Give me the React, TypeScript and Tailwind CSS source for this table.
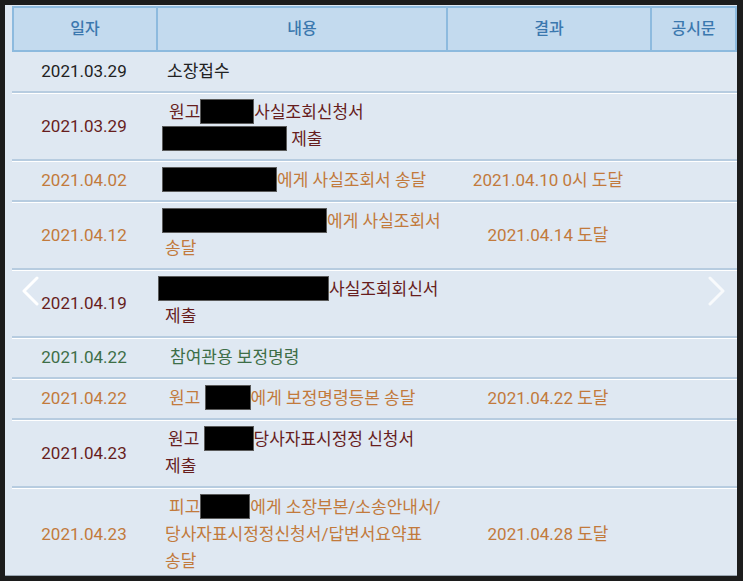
const BLACK = "text-[#222222]";
const RED = "text-[#671d1d]";
const ORANGE = "text-[#c27a3c]";
const GREEN = "text-[#3d6e47]";

function Box({ w, className = "" }: { w: number; className?: string }) {
  return (
    <span
      className={`inline-block h-[25px] bg-black border border-[#5a5a5a] align-[-6px] ${className}`}
      style={{ width: w }}
    />
  );
}

type Row = {
  date: string;
  color: string;
  content: React.ReactNode;
  result?: string;
  first?: boolean;
};

const rows: Row[] = [
  { date: "2021.03.29", color: BLACK, content: <span className="ml-[2px]">소장접수</span>, first: true },
  {
    date: "2021.03.29",
    color: RED,
    content: (
      <>
        <span className="ml-[4px]">원고</span>
        <Box w={54} />
        사실조회신청서
        <br />
        <Box w={125} className="-ml-[3px]" /> 제출
      </>
    ),
  },
  {
    date: "2021.04.02",
    color: ORANGE,
    content: (
      <>
        <Box w={115} className="-ml-[3px]" />
        에게 사실조회서 송달
      </>
    ),
    result: "2021.04.10 0시 도달",
  },
  {
    date: "2021.04.12",
    color: ORANGE,
    content: (
      <>
        <Box w={165} className="-ml-[3px]" />
        에게 사실조회서
        <br />
        송달
      </>
    ),
    result: "2021.04.14 도달",
  },
  {
    date: "2021.04.19",
    color: RED,
    content: (
      <>
        <Box w={171} className="-ml-[7px]" />
        사실조회회신서
        <br />
        제출
      </>
    ),
  },
  { date: "2021.04.22", color: GREEN, content: <span className="ml-[5px]">참여관용 보정명령</span> },
  {
    date: "2021.04.22",
    color: ORANGE,
    content: (
      <>
        <span className="ml-[4px]">원고 </span>
        <Box w={46} />
        에게 보정명령등본 송달
      </>
    ),
    result: "2021.04.22 도달",
  },
  {
    date: "2021.04.23",
    color: RED,
    content: (
      <>
        <span className="ml-[3px]">원고 </span>
        <Box w={50} />
        당사자표시정정 신청서
        <br />
        제출
      </>
    ),
  },
  {
    date: "2021.04.23",
    color: ORANGE,
    content: (
      <>
        <span className="ml-[4px]">피고</span>
        <Box w={50} />
        에게 소장부본/소송안내서/
        <br />
        당사자표시정정신청서/답변서요약표
        <br />
        송달
      </>
    ),
    result: "2021.04.28 도달",
  },
];

export default function App() {
  return (
    <div className="relative h-[581px] w-[743px] overflow-hidden bg-[#1c1c1c] pl-[5px] pt-[5px] font-['Roboto','Noto_Sans_CJK_KR',sans-serif]">
      <div className="h-[571px] w-[732px] overflow-hidden border-b border-[#9aa6b2] bg-[#dfe8f2] pl-[7px] pt-[1px]">
        <div className="flex h-[46px] border-2 border-[#8dbade] bg-[#c3daee] text-[16px] font-medium text-[#3b78ae]">
          <div className="flex w-[142px] items-center justify-center">일자</div>
          <div className="flex w-[290px] items-center justify-center border-l-2 border-[#8dbade]">내용</div>
          <div className="flex w-[204px] items-center justify-center border-l-2 border-[#8dbade]">결과</div>
          <div className="flex flex-1 items-center justify-center border-l-2 border-[#8dbade]">공시문</div>
        </div>

        {rows.map((r, i) => (
          <div
            key={i}
            className={`flex items-center py-[6px] leading-[27px] ${r.color} ${
              r.first ? "" : "border-t-2 border-[#b7cce0] shadow-[inset_0_1px_0_#ffffff]"
            }`}
          >
            <div className="w-[144px] text-center text-[17px]">{r.date}</div>
            <div className="w-[290px] pl-[9px] text-[17px]">{r.content}</div>
            <div className="w-[204px] text-center text-[17px]">{r.result ?? ""}</div>
            <div className="flex-1" />
          </div>
        ))}
      </div>

      <svg className="absolute left-[21px] top-[276px]" width="18" height="30" viewBox="0 0 18 30">
        <polyline points="16,2 3,15 16,28" fill="none" stroke="#ffffff" strokeWidth="3" strokeLinecap="round" strokeLinejoin="round" />
      </svg>
      <svg className="absolute left-[708px] top-[276px] opacity-80" width="18" height="30" viewBox="0 0 18 30">
        <polyline points="2,2 15,15 2,28" fill="none" stroke="#ffffff" strokeWidth="3" strokeLinecap="round" strokeLinejoin="round" />
      </svg>
    </div>
  );
}
